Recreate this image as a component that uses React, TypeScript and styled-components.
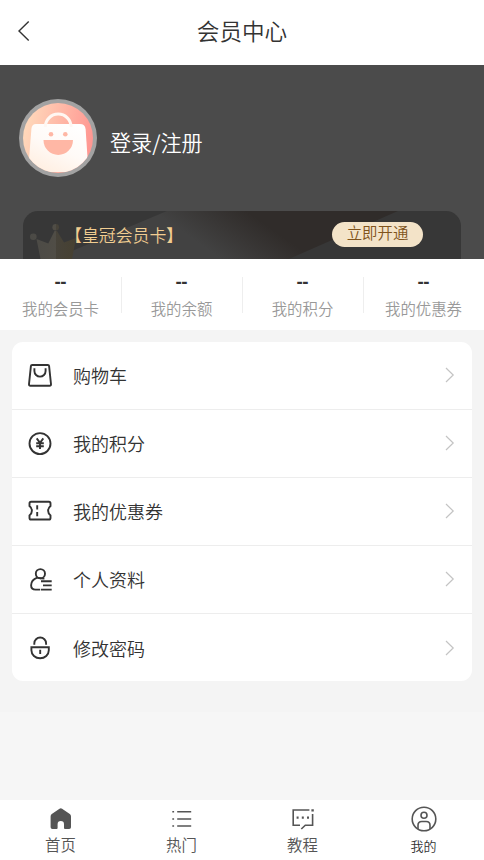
import React from 'react';
import styled, { createGlobalStyle } from 'styled-components';

const GlobalStyle = createGlobalStyle`
  * { box-sizing: border-box; }
  body {
    margin: 0;
    background: #f6f6f6;
    color: #333;
    font-family: "Noto Sans CJK SC", sans-serif;
    font-weight: 350;
  }
`;

const Page = styled.div`
  display: flex;
  flex-direction: column;
  width: 100%;
  height: 860px;
  overflow: hidden;
`;

const Header = styled.header`
  display: grid;
  grid-template-columns: 48px 1fr 48px;
  align-items: center;
  height: 65px;
  padding-bottom: 3px;
  background: #fff;
`;

const BackIcon = styled.svg`
  width: 14px;
  height: 22px;
  margin-left: 17px;
`;

const Title = styled.h1`
  margin: 0 0 1px;
  font-size: 22.6px;
  line-height: 32px;
  font-weight: 350;
  text-align: center;
`;

const Hero = styled.section`
  height: 194px;
  padding: 34px 23px 0 19px;
  background: #4b4b4b;
  overflow: hidden;
`;

const Profile = styled.div`
  display: flex;
  align-items: center;
  gap: 13px;
  height: 78px;
`;

const Avatar = styled.svg`
  width: 78px;
  height: 78px;
`;

const LoginText = styled.span`
  padding-top: 7px;
  color: #fff;
  font-size: 21.1px;
  line-height: 30px;
`;

const MemberCard = styled.div`
  position: relative;
  display: flex;
  align-items: flex-start;
  justify-content: space-between;
  height: 80px;
  margin: 34px 0 0 4px;
  padding: 11px 38px 0 42px;
  border-radius: 15px;
  background: #373737;
  overflow: hidden;
`;

const CardArt = styled.svg`
  position: absolute;
  inset: 0;
  width: 438px;
  height: 48px;
`;

const CardName = styled.span`
  position: relative;
  color: #f1cd91;
  font-size: 16.9px;
  line-height: 25px;
`;

const OpenButton = styled.button`
  position: relative;
  width: 91px;
  height: 25px;
  padding: 0 0 4px;
  border: 0;
  border-radius: 13px;
  background: #f3e3c8;
  color: #80531b;
  font-family: inherit;
  font-size: 15.4px;
  font-weight: 350;
  line-height: 21px;
`;

const Stats = styled.section`
  display: grid;
  grid-template-columns: repeat(4, 1fr);
  height: 71px;
  background: #fff;
`;

const Stat = styled.div`
  position: relative;
  display: flex;
  flex-direction: column;
  align-items: center;
  padding-top: 11px;
  & + &::before {
    content: '';
    position: absolute;
    left: 0;
    top: 18px;
    width: 1px;
    height: 36px;
    background: #eee;
  }
`;

const StatValue = styled.strong`
  font-family: "Noto Sans", sans-serif;
  font-size: 18px;
  line-height: 22px;
  font-weight: 700;
`;

const StatLabel = styled.span`
  margin-top: 4px;
  color: #999;
  font-size: 15.4px;
  line-height: 24px;
`;

const Content = styled.main`
  height: 382px;
  padding: 12px 12px 0;
  background: #f4f4f4;
`;

const Menu = styled.div`
  border-radius: 11px;
  background: #fff;
  overflow: hidden;
`;

const MenuRow = styled.div`
  display: flex;
  align-items: center;
  height: 68px;
  padding: 0 16px 1px 15px;
  border-bottom: 1px solid #ededed;
  &:last-child { height: 67px; padding-bottom: 0; border-bottom: 0; }
`;

const MenuIcon = styled.svg`
  width: 26px;
  height: 26px;
  fill: none;
  stroke: #333;
  stroke-width: 1.9;
`;

const MenuLabel = styled.span`
  flex: 1;
  margin-left: 20px;
  font-size: 18px;
  line-height: 28px;
`;

const Arrow = styled.svg`
  width: 12px;
  height: 18px;
  fill: none;
  stroke: #c4c4c4;
  stroke-width: 1.2;
`;

const Spacer = styled.div`
  flex: 1;
`;

const TabBar = styled.nav`
  display: grid;
  grid-template-columns: repeat(4, 1fr);
  height: 60px;
  background: #fff;
`;

const Tab = styled.div<{ $active?: boolean }>`
  display: flex;
  flex-direction: column;
  align-items: center;
  padding-top: 5px;
  color: ${(p) => (p.$active ? '#333' : '#555')};
  font-size: ${(p) => (p.$active ? '13px' : '15.4px')};
  line-height: 24px;
  span { margin-top: ${(p) => (p.$active ? '1px' : '-1px')}; }
`;

const TabIcon = styled.svg`
  width: 28px;
  height: 28px;
  flex: none;
  fill: none;
  stroke: #555;
  stroke-width: 1.6;
`;

const stats = ['我的会员卡', '我的余额', '我的积分', '我的优惠券'];

const menu = [
  {
    label: '购物车',
    icon: (
      <>
        <path d="M5.2 3H20.8Q22 3 22.1 4.2L24 22.2Q24.1 23.8 22.6 23.8H3.4Q1.9 23.8 2 22.2L3.9 4.2Q4 3 5.2 3Z" />
        <path d="M7.4 6.2V9a5.6 5.6 0 0 0 11.2 0V6.2" />
      </>
    ),
  },
  {
    label: '我的积分',
    icon: (
      <>
        <circle cx="13" cy="13.6" r="10.5" />
        <path d="M9.7 8.4L13 12.8l3.3-4.4M13 12.8v6.3M9.2 13.3h7.6M9.2 16.3h7.6" />
      </>
    ),
  },
  {
    label: '我的优惠券',
    icon: (
      <>
        <path d="M4.1 3.8H21.9Q23.5 3.8 23.5 5.4V8Q21.1 10.1 21.1 12.7t2.4 4.7V19.9Q23.5 21.5 21.9 21.5H4.1Q2.5 21.5 2.5 19.9V17.4Q4.9 15.3 4.9 12.7T2.5 8V5.4Q2.5 3.8 4.1 3.8Z" />
        <path d="M10.2 7.2v4.2M10.2 13.9v4.3" />
      </>
    ),
  },
  {
    label: '个人资料',
    icon: (
      <>
        <circle cx="13.4" cy="7.7" r="4.6" />
        <path d="M10.2 11.6C6.8 12.8 4.2 15.3 4.1 19.3Q4.1 23.6 8.6 23.6H13.2M14 15.3h10.7M16 19.4h8.7M14 23.6h10.7M10.2 11.7q3 .9 7.2.9" />
      </>
    ),
  },
  {
    label: '修改密码',
    icon: (
      <path d="M7.3 9.8V8.4a5.9 5.9 0 0 1 11.8 0v1.4M4.4 12.2H21.8V15.3a8.7 8 0 0 1-17.4 0ZM13.2 14.8v4.3" />
    ),
  },
];

const tabs = [
  {
    label: '首页',
    icon: <path d="M3.6 11.4Q3.6 10 4.8 9.1L12.5 3.8Q13.8 2.9 15.1 3.8L22.8 9.1Q24 10 24 11.4V22.2Q24 24 22.2 24H18Q17 24 17 23V19.2a3.2 3.2 0 0 0-6.4 0V23Q10.6 24 9.6 24H5.4Q3.6 24 3.6 22.2Z" fill="#555" stroke="none" />,
  },
  {
    label: '热门',
    icon: <path d="M4.3 6.7h1.8M4.3 14h1.8M4.3 21h1.8M9.2 6.7h14M9.2 14h14M9.2 21h14" />,
  },
  {
    label: '教程',
    icon: (
      <>
        <path d="M20.4 5H4.2V20.2H11M23.6 9V20.2H16.3L12.3 24" />
        <path d="M7.6 12.6h2M12.8 12.6h2M18 12.6h2M22.4 5.3h2.4" strokeWidth="2.2" />
      </>
    ),
  },
  {
    label: '我的',
    icon: (
      <>
        <circle cx="14" cy="14" r="11.8" />
        <circle cx="14" cy="10.2" r="3" />
        <path d="M8 24V20.3q0-3.8 3.8-3.8h4.4q3.8 0 3.8 3.8V24" />
      </>
    ),
  },
];

export default function App() {
  return (
    <Page>
      <GlobalStyle />
      <Header>
        <BackIcon viewBox="0 0 14 22" fill="none" stroke="#333" strokeWidth="1.4">
          <path d="M11.7 1.5L2 11l9.7 9.5" />
        </BackIcon>
        <Title>会员中心</Title>
      </Header>
      <Hero>
        <Profile>
          <Avatar viewBox="0 0 78 78">
            <defs>
              <linearGradient id="peach" x1="0" y1=".2" x2="1" y2=".4">
                <stop stopColor="#ffdcbd" />
                <stop offset="1" stopColor="#ff9792" />
              </linearGradient>
              <linearGradient id="bag" x1=".8" y1="0" x2=".2" y2="1">
                <stop stopColor="#fff" />
                <stop offset=".5" stopColor="#fffaf7" />
                <stop offset="1" stopColor="#ffeee0" />
              </linearGradient>
              <clipPath id="face"><circle cx="39" cy="39" r="35" /></clipPath>
            </defs>
            <circle cx="39" cy="39" r="39" fill="#a2a2a2" />
            <circle cx="39" cy="39" r="35" fill="url(#peach)" />
            <g clipPath="url(#face)">
              <path d="M17 25H61Q66 25 66.6 30L69.5 73H9L12.4 30Q12.8 25 17 25Z" fill="url(#bag)" />
              <path d="M26.3 28a12.9 12.9 0 0 1 25.8 0" fill="none" stroke="#fff7f2" strokeWidth="3" />
              <circle cx="32" cy="35.2" r="2.3" fill="#ffb7a5" />
              <circle cx="46.3" cy="35.2" r="2.3" fill="#ffb7a5" />
              <path d="M24.5 41H54a14.75 15 0 0 1-29.5 0Z" fill="#ffb7a5" />
            </g>
          </Avatar>
          <LoginText>登录/注册</LoginText>
        </Profile>
        <MemberCard>
          <CardArt viewBox="0 0 438 48">
            <defs>
              <linearGradient id="beam" gradientUnits="userSpaceOnUse" x1="130" y1="0" x2="161" y2="-44">
                <stop stopColor="#424242" />
                <stop offset="1" stopColor="#302c2a" />
              </linearGradient>
              <linearGradient id="crown" gradientUnits="userSpaceOnUse" x1="7" y1="0" x2="56" y2="0">
                <stop stopColor="#4b4a46" />
                <stop offset=".52" stopColor="#504d46" />
                <stop offset=".53" stopColor="#47433a" />
                <stop offset="1" stopColor="#464030" />
              </linearGradient>
            </defs>
            <path d="M144 0H375L266 48H30Z" fill="url(#beam)" />
            <g fill="url(#crown)">
              <circle cx="10.3" cy="25.7" r="3.3" />
              <circle cx="32.7" cy="16.3" r="3.3" />
              <path d="M13.5 28L25.3 32.5L31.5 20H34L41 31.5L53 27L49 48H17.5Z" />
            </g>
          </CardArt>
          <CardName>【皇冠会员卡】</CardName>
          <OpenButton>立即开通</OpenButton>
        </MemberCard>
      </Hero>
      <Stats>
        {stats.map((label) => (
          <Stat key={label}>
            <StatValue>--</StatValue>
            <StatLabel>{label}</StatLabel>
          </Stat>
        ))}
      </Stats>
      <Content>
        <Menu>
          {menu.map(({ label, icon }) => (
            <MenuRow key={label}>
              <MenuIcon viewBox="0 0 26 26">{icon}</MenuIcon>
              <MenuLabel>{label}</MenuLabel>
              <Arrow viewBox="0 0 12 18"><path d="M2 2l7.2 7L2 16" /></Arrow>
            </MenuRow>
          ))}
        </Menu>
      </Content>
      <Spacer />
      <TabBar>
        {tabs.map(({ label, icon }) => (
          <Tab key={label} $active={label === '我的'}>
            <TabIcon viewBox="0 0 28 28">{icon}</TabIcon>
            <span>{label}</span>
          </Tab>
        ))}
      </TabBar>
    </Page>
  );
}
